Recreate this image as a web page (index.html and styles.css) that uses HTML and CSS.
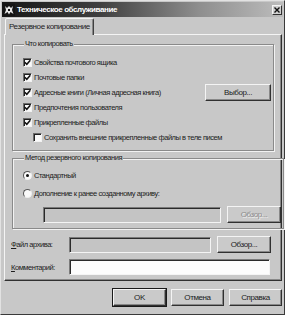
FILE: index.html
```html
<!DOCTYPE html>
<html lang="ru">
<head>
    <meta charset="UTF-8">
    <meta name="viewport" content="width=device-width, initial-scale=1.0">
    <title>Техническое обслуживание</title>
    <link rel="stylesheet" href="styles.css">
</head>
<body>
    <div class="window">
        <div class="titlebar">
            <svg class="app-icon" width="12" height="12" viewBox="0 0 12 12">
                <rect width="12" height="12" fill="#141414"/>
                <path d="M2 2 L4 4 L6 2 L8 4 L10 2 L9 6 L10.5 10 L7.5 8 L6 10.5 L4.5 8 L1.5 10 L3 6 Z" fill="#e8e8e8"/>
                <rect x="5" y="5" width="2" height="2" fill="#141414"/>
            </svg>
            <span class="title">Техническое обслуживание</span>
            <span class="close">
                <svg width="6" height="6" viewBox="0 0 6 6"><path d="M0.5 0.5 L5.5 5.5 M5.5 0.5 L0.5 5.5" stroke="#111" stroke-width="1.4"/></svg>
            </span>
        </div>

        <div class="tabs">
            <div class="tab">Резервное копирование</div>
        </div>

        <div class="panel">
            <fieldset class="group group-what">
                <legend>Что копировать</legend>
                <div class="opt"><span class="check"><svg width="7" height="7" viewBox="0 0 7 7"><path d="M0.8 3.2 L2.8 5.3 L6.3 1.2" fill="none" stroke="#111" stroke-width="1.5"/></svg></span>Свойства почтового ящика</div>
                <div class="opt"><span class="check"><svg width="7" height="7" viewBox="0 0 7 7"><path d="M0.8 3.2 L2.8 5.3 L6.3 1.2" fill="none" stroke="#111" stroke-width="1.5"/></svg></span>Почтовые папки</div>
                <div class="opt"><span class="check"><svg width="7" height="7" viewBox="0 0 7 7"><path d="M0.8 3.2 L2.8 5.3 L6.3 1.2" fill="none" stroke="#111" stroke-width="1.5"/></svg></span>Адресные книги (Личная адресная книга)<button class="btn btn-pick">Выбор...</button></div>
                <div class="opt"><span class="check"><svg width="7" height="7" viewBox="0 0 7 7"><path d="M0.8 3.2 L2.8 5.3 L6.3 1.2" fill="none" stroke="#111" stroke-width="1.5"/></svg></span>Предпочтения пользователя</div>
                <div class="opt"><span class="check"><svg width="7" height="7" viewBox="0 0 7 7"><path d="M0.8 3.2 L2.8 5.3 L6.3 1.2" fill="none" stroke="#111" stroke-width="1.5"/></svg></span>Прикрепленные файлы</div>
                <div class="opt opt-sub"><span class="check"></span>Сохранить внешние прикрепленные файлы в теле писем</div>
            </fieldset>

            <fieldset class="group group-method">
                <legend>Метод резервного копирования</legend>
                <div class="opt"><span class="radio on"></span>Стандартный</div>
                <div class="opt opt-second"><span class="radio"></span>Дополнение к ранее созданному архиву:</div>
                <div class="field-row field-row-sub">
                    <span class="field field-disabled field-append"></span>
                    <button class="btn btn-browse" disabled>Обзор...</button>
                </div>
            </fieldset>

            <div class="field-row field-row-file">
                <span class="caption"><u>Ф</u>айл архива:</span>
                <span class="field field-disabled field-file"></span>
                <button class="btn btn-browse">Обзор...</button>
            </div>
            <div class="field-row field-row-comment">
                <span class="caption"><u>К</u>омментарий:</span>
                <span class="field field-comment"></span>
            </div>
        </div>

        <div class="actions">
            <button class="btn btn-action btn-default">OK</button>
            <button class="btn btn-action">Отмена</button>
            <button class="btn btn-action">Справка</button>
        </div>
    </div>
</body>
</html>
```

FILE: styles.css
```css
body {
    margin: 0;
    font-family: "Liberation Sans", Arial, sans-serif;
    font-size: 7.5px;
    letter-spacing: -0.45px;
    color: #1c1c1c;
    background: #c8c8c8;
}
.window {
    width: 285px;
    height: 315px;
    box-sizing: border-box;
    padding: 1px 1px 0;
    border: 1px solid #3a3a3a;
    border-top-color: #e2e2e2;
    border-left-color: #e2e2e2;
    background: #c8c8c8;
}
.titlebar {
    height: 15px;
    display: flex;
    align-items: center;
    padding: 0 1px 0 1px;
    background: linear-gradient(to right, #161616, #404040 35%, #8e8e8e 70%, #bcbcbc);
    color: #fff;
}
.app-icon {
    flex: none;
}
.title {
    margin-left: 2px;
    font-size: 8px;
    font-weight: bold;
    letter-spacing: -0.4px;
    white-space: nowrap;
}
.close {
    margin-left: auto;
    width: 10px;
    height: 10px;
    box-sizing: border-box;
    display: flex;
    align-items: center;
    justify-content: center;
    background: #d0d0d0;
    border: 1px solid;
    border-color: #f4f4f4 #303030 #303030 #f4f4f4;
}
.tabs {
    display: flex;
    margin-top: 1px;
    padding-left: 3px;
}
.tab {
    position: relative;
    z-index: 1;
    width: 89px;
    height: 17px;
    box-sizing: border-box;
    margin-bottom: -1px;
    padding: 3px 0 0 3px;
    line-height: 10px;
    font-size: 8px;
    letter-spacing: -0.4px;
    white-space: nowrap;
    background: #c8c8c8;
    border: 1px solid;
    border-bottom: none;
    border-color: #f4f4f4 #404040 transparent #f4f4f4;
    box-shadow: inset -1px 0 #888;
    border-radius: 2px 2px 0 0;
}
.panel {
    width: 278px;
    height: 247px;
    box-sizing: border-box;
    margin-left: 2px;
    border: 1px solid;
    border-color: #f4f4f4 #303030 #303030 #f4f4f4;
    box-shadow: inset -1px -1px #888;
}
.group {
    width: 262px;
    box-sizing: border-box;
    margin: 0 0 0 7px;
    padding: 0 2px 0 10px;
    border: 1px solid #8a8a8a;
    box-shadow: inset 1px 1px #f2f2f2, 1px 1px #f2f2f2;
}
.group legend {
    margin-left: 1px;
    padding: 0 1px;
    line-height: 10px;
    background: #c8c8c8;
}
.group-what {
    margin-top: 4px;
    padding-top: 6px;
    padding-bottom: 5px;
}
.group-method {
    margin-top: 2px;
    padding-top: 5px;
    padding-bottom: 5px;
}
.opt {
    height: 15px;
    display: flex;
    align-items: center;
    white-space: nowrap;
}
.opt-sub {
    padding-left: 10px;
}
.opt-second {
    margin-top: 3px;
}
.check {
    width: 9px;
    height: 9px;
    box-sizing: border-box;
    margin-right: 2px;
    display: flex;
    align-items: center;
    justify-content: center;
    background: #fafafa;
    border: 1px solid;
    border-color: #6a6a6a #f2f2f2 #f2f2f2 #6a6a6a;
    box-shadow: inset 1px 1px #222;
}
.radio {
    width: 9px;
    height: 9px;
    box-sizing: border-box;
    margin-right: 2px;
    border-radius: 50%;
    background: #fafafa;
    border: 1px solid;
    border-color: #555 #eee #eee #555;
    display: flex;
    align-items: center;
    justify-content: center;
}
.radio.on::after {
    content: "";
    width: 3px;
    height: 3px;
    border-radius: 50%;
    background: #111;
}
.btn {
    height: 17px;
    box-sizing: border-box;
    padding: 0;
    font-family: inherit;
    font-size: 8px;
    letter-spacing: -0.4px;
    color: #1c1c1c;
    background: #cacaca;
    border: 1px solid;
    border-color: #f4f4f4 #303030 #303030 #f4f4f4;
    box-shadow: inset -1px -1px #888;
}
.btn:disabled {
    color: #8c8c8c;
    text-shadow: 1px 1px #f0f0f0;
}
.btn-pick {
    width: 66px;
    margin-left: auto;
    flex: none;
}
.btn-browse {
    width: 54px;
    margin-left: 6px;
    flex: none;
}
.field-row {
    display: flex;
    align-items: center;
}
.field-row-sub {
    height: 17px;
    margin-top: 5px;
    padding-left: 20px;
}
.field-row-file {
    height: 17px;
    margin-top: 7px;
    padding-left: 6px;
}
.field-row-comment {
    height: 16px;
    margin-top: 6px;
    padding-left: 6px;
}
.caption {
    width: 58px;
    flex: none;
}
.field {
    height: 16px;
    box-sizing: border-box;
    display: block;
    border: 1px solid;
    border-color: #7a7a7a #f4f4f4 #f4f4f4 #7a7a7a;
    box-shadow: inset 1px 1px #2a2a2a;
}
.field-disabled {
    background: #c4c4c4;
}
.field-append {
    width: 178px;
}
.field-file {
    width: 142px;
}
.field-comment {
    width: 201px;
    background: #fcfcfc;
}
.actions {
    display: flex;
    justify-content: flex-end;
    gap: 5px;
    margin-top: 8px;
    padding-right: 1px;
}
.btn-action {
    width: 53px;
}
.btn-default {
    outline: 1px solid #1a1a1a;
}
```
